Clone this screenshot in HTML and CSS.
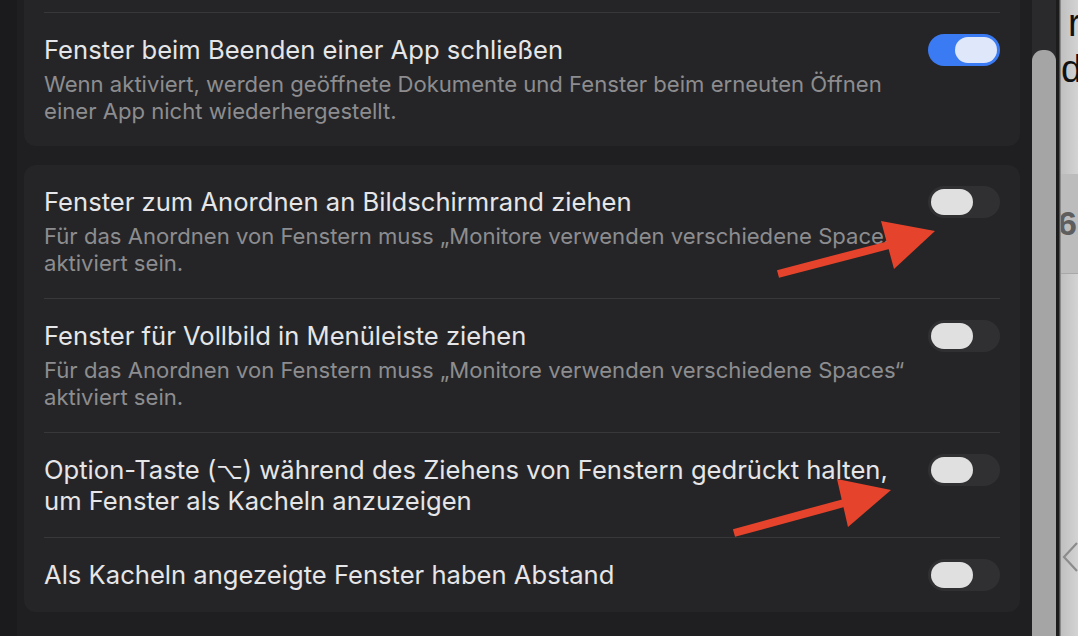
FILE: index.html
```html
<!DOCTYPE html>
<html lang="de">
<head>
<meta charset="utf-8">
<title>Schreibtisch &amp; Dock</title>
<link rel="stylesheet" href="styles.css">
</head>
<body>
<div class="window">
  <main class="settings">
    <div class="content">
      <section class="group">
        <div class="row row-prev"></div>
        <div class="row">
          <div class="text">
            <div class="title">Fenster beim Beenden einer App schließen</div>
            <div class="desc">Wenn aktiviert, werden geöffnete Dokumente und Fenster beim erneuten Öffnen<br>einer App nicht wiederhergestellt.</div>
          </div>
          <span class="switch on"><span class="knob"></span></span>
        </div>
      </section>

      <section class="group">
        <div class="row">
          <div class="text">
            <div class="title">Fenster zum Anordnen an Bildschirmrand ziehen</div>
            <div class="desc">Für das Anordnen von Fenstern muss „Monitore verwenden verschiedene Spaces“<br>aktiviert sein.</div>
          </div>
          <span class="switch"><span class="knob"></span></span>
        </div>
        <div class="row">
          <div class="text">
            <div class="title">Fenster für Vollbild in Menüleiste ziehen</div>
            <div class="desc">Für das Anordnen von Fenstern muss „Monitore verwenden verschiedene Spaces“<br>aktiviert sein.</div>
          </div>
          <span class="switch"><span class="knob"></span></span>
        </div>
        <div class="row">
          <div class="text">
            <div class="title">Option-Taste (<span class="key">⌥</span>) während des Ziehens von Fenstern gedrückt halten,<br>um Fenster als Kacheln anzuzeigen</div>
          </div>
          <span class="switch"><span class="knob"></span></span>
        </div>
        <div class="row">
          <div class="text">
            <div class="title">Als Kacheln angezeigte Fenster haben Abstand</div>
          </div>
          <span class="switch"><span class="knob"></span></span>
        </div>
      </section>
    </div>
  </main>

  <div class="scrollbar"><div class="thumb"></div></div>
  <div class="divider"></div>

  <aside class="behind">
    <div class="behind-text">
      <div class="line l1">r</div>
      <div class="line l2">d</div>
    </div>
    <div class="band"><span class="band-glyph">6</span></div>
    <div class="chev">
      <svg width="16" height="30" viewBox="0 0 16 30"><polyline points="15,1 2,15 15,29" fill="none" stroke="#8c8c8c" stroke-width="2.2"/></svg>
    </div>
  </aside>

  <svg class="annotations" width="1078" height="636" viewBox="0 0 1078 636">
    <line x1="778" y1="274" x2="889" y2="245" stroke="#e6432c" stroke-width="8"/>
    <polygon points="935,231 881,221 894,269" fill="#e6432c"/>
    <line x1="734" y1="533" x2="844" y2="503" stroke="#e6432c" stroke-width="8"/>
    <polygon points="891,490 837,479 848,527" fill="#e6432c"/>
  </svg>
</div>
</body>
</html>
```

FILE: styles.css
```css
* { box-sizing: border-box; }

html, body {
  margin: 0;
  height: 100%;
}

body {
  background: #1e1e20;
  font-family: Inter, "Noto Sans", "DejaVu Sans", sans-serif;
  overflow: hidden;
}

.window {
  position: relative;
  display: flex;
  width: 1078px;
  height: 636px;
  overflow: hidden;
}

/* ---------- settings pane ---------- */
.settings {
  flex: none;
  width: 1032px;
  height: 100%;
  overflow: hidden;
  padding: 0 12px 0 24px;
  background: linear-gradient(to right, #1b1b1d 0, #1b1b1d 17px, #1f1f21 17px);
}

.content {
  margin-top: -48px;
  display: flex;
  flex-direction: column;
  gap: 19px;
}

.group {
  background: #252527;
  border-radius: 12px;
  padding: 0 20px;
}

.row {
  display: flex;
  align-items: flex-start;
  gap: 20px;
  padding: 21px 0;
}

.row + .row {
  border-top: 1px solid #38383a;
}

.row-prev {
  height: 60px;
  padding: 0;
}

.text {
  flex: 1;
  min-width: 0;
}

.title {
  font-size: 25.6px;
  line-height: 31px;
  color: #e6e6e8;
  white-space: nowrap;
}

.key {
  font-family: "DejaVu Sans", sans-serif;
  font-size: 23px;
  line-height: 1;
}

.desc {
  margin-top: 6px;
  font-size: 22.1px;
  line-height: 27px;
  color: #8d8d90;
  white-space: nowrap;
}

.switch {
  flex: none;
  display: flex;
  width: 72px;
  height: 32px;
  padding: 3px;
  border-radius: 16px;
  background: #303032;
}

.switch .knob {
  width: 42px;
  height: 26px;
  border-radius: 13px;
  background: #e0e0e0;
}

.switch.on {
  justify-content: flex-end;
  background: #3a7af2;
}

.switch.on .knob {
  background: #dfe8fb;
}

/* ---------- scrollbar ---------- */
.scrollbar {
  flex: none;
  width: 24px;
  height: 100%;
  display: flex;
  flex-direction: column;
  padding-top: 50px;
  background: #2a2a2c;
}

.thumb {
  flex: 1;
  background: #a5a5a5;
  border-radius: 11px 11px 0 0;
}

.divider {
  flex: none;
  width: 5px;
  height: 100%;
  background: linear-gradient(to right, #1c1c1c 0, #1c1c1c 3px, #4d4d4d 3px, #4d4d4d 4px, #8a8a8a 4px);
}

/* ---------- window behind ---------- */
.behind {
  flex: 1;
  min-width: 0;
  height: 100%;
  overflow: hidden;
  display: flex;
  flex-direction: column;
  background: linear-gradient(to right, #c0c0c0, #d3d3d3);
  font-family: "Liberation Sans", Arial, sans-serif;
  color: #111;
}

.behind-text {
  height: 174px;
}

.line {
  font-size: 38px;
  line-height: 46px;
  white-space: nowrap;
}

.l1 { padding-left: 7px; }

.band {
  height: 100px;
  background: #bcbcbc;
  border-bottom: 1px solid #a8a8a8;
  padding-top: 32px;
}

.band-glyph {
  display: block;
  margin-left: -3px;
  font-size: 34px;
  line-height: 34px;
  font-weight: bold;
  color: #5e5e5e;
}

.chev {
  padding-top: 268px;
  padding-left: 1px;
}

.chev svg { display: block; }

/* ---------- annotation overlay ---------- */
.annotations {
  position: absolute;
  top: 0;
  left: 0;
  pointer-events: none;
}
```
